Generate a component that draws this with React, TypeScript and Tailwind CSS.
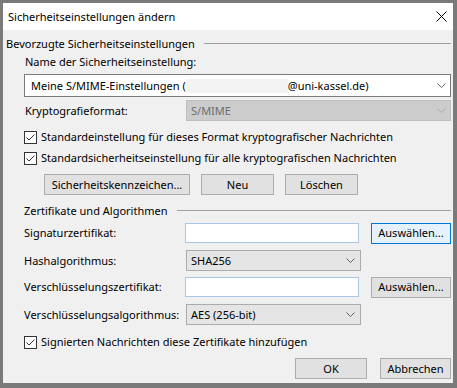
import React from "react";

const Chevron = ({ color = "#606060" }: { color?: string }) => (
  <svg width="9" height="5" viewBox="0 0 9 5" className="shrink-0">
    <path d="M0.5 0.5 L4.5 4.5 L8.5 0.5" fill="none" stroke={color} strokeWidth="1" />
  </svg>
);

const CheckBox = ({ label }: { label: string }) => (
  <div className="flex items-center h-4 ml-[18px]">
    <div className="w-[13px] h-[13px] border border-[#333333] bg-white flex items-center justify-center">
      <svg width="11" height="11" viewBox="0 0 11 11">
        <path d="M1.5 5.5 L4 8 L9.5 2.5" fill="none" stroke="#333333" strokeWidth="1" />
      </svg>
    </div>
    <span className="ml-[4px]">{label}</span>
  </div>
);

const Button = ({ label, width, focused }: { label: string; width: string; focused?: boolean }) => (
  <div
    className={`${width} h-[21px] flex items-center justify-center border ${
      focused ? "border-[#0078d7] bg-[#e5f1fb]" : "border-[#adadad] bg-[#e1e1e1]"
    }`}
  >
    {label}
  </div>
);

const GroupHeader = ({ label, indent }: { label: string; indent?: boolean }) => (
  <div className={`flex items-center h-4 ${indent ? "ml-[18px]" : ""}`}>
    <span className="whitespace-nowrap">{label}</span>
    <div className="flex-1 ml-[9px] border-t border-[#a0a0a0] mt-[-1px]"></div>
  </div>
);

const App = () => {
  return (
    <div
      className="w-[457px] h-[388px] bg-[#7a7a7a] pl-[3px] pt-[3px] pr-[4px] pb-[5px] text-[11px] text-black leading-4"
      style={{ fontFamily: '"Segoe UI", "Noto Sans", sans-serif' }}
    >
      <div className="w-full h-full flex flex-col bg-[#f0f0f0]">
        <div className="h-[27px] bg-white flex items-center justify-between pl-[5px] pr-[4px]">
          <span>Sicherheitseinstellungen ändern</span>
          <svg width="11" height="11" viewBox="0 0 11 11" className="mr-[2px]">
            <path d="M0.5 0.5 L10.5 10.5 M10.5 0.5 L0.5 10.5" stroke="#000" strokeWidth="1" />
          </svg>
        </div>

        <div className="flex flex-col pl-[3px] pr-[2px]">
          <div className="mt-[6px]">
            <GroupHeader label="Bevorzugte Sicherheitseinstellungen" />
          </div>
          <div className="mt-[2px] ml-[19px] h-4">Name der Sicherheitseinstellung:</div>
          <div className="mt-[4px] ml-[18px] h-[23px] bg-white border border-[#7a7a7a] flex items-center pl-[6px] pr-[4px]">
            <span>Meine S/MIME-Einstellungen (</span>
            <span className="inline-block w-[102px] h-[14px] bg-[#f3f3f3]"></span>
            <span>@uni-kassel.de)</span>
            <div className="flex-1"></div>
            <Chevron />
          </div>

          <div className="mt-[3px] ml-[19px] flex items-center h-[21px]">
            <span className="w-[161px]">Kryptografieformat:</span>
            <div className="flex-1 h-[21px] bg-[#cccccc] border border-[#bfbfbf] flex items-center pl-[4px] pr-[4px] text-[#6d6d6d]">
              <span className="flex-1">S/MIME</span>
              <Chevron color="#a8a8a8" />
            </div>
          </div>

          <div className="mt-[8px]">
            <CheckBox label="Standardeinstellung für dieses Format kryptografischer Nachrichten" />
          </div>
          <div className="mt-[5px]">
            <CheckBox label="Standardsicherheitseinstellung für alle kryptografischen Nachrichten" />
          </div>

          <div className="mt-[8px] ml-[38px] flex gap-[11px]">
            <Button label="Sicherheitskennzeichen..." width="w-[146px]" />
            <Button label="Neu" width="w-[73px]" />
            <Button label="Löschen" width="w-[73px]" />
          </div>

          <div className="mt-[8px]">
            <GroupHeader label="Zertifikate und Algorithmen" indent />
          </div>

          <div className="mt-[4px] ml-[18px] flex items-center h-5">
            <span className="w-[162px]">Signaturzertifikat:</span>
            <div className="w-[175px] h-5 bg-white border border-[#aac8e6]"></div>
            <div className="ml-[12px]">
              <Button label="Auswählen..." width="w-[80px]" focused />
            </div>
          </div>

          <div className="mt-[7px] ml-[18px] flex items-center h-[21px]">
            <span className="w-[162px]">Hashalgorithmus:</span>
            <div className="w-[175px] h-[21px] bg-[#e5e5e5] border border-[#acacac] flex items-center pl-[4px] pr-[5px]">
              <span className="flex-1">SHA256</span>
              <Chevron />
            </div>
          </div>

          <div className="mt-[6px] ml-[18px] flex items-center h-5">
            <span className="w-[162px]">Verschlüsselungszertifikat:</span>
            <div className="w-[175px] h-5 bg-white border border-[#aac8e6]"></div>
            <div className="ml-[12px]">
              <Button label="Auswählen..." width="w-[80px]" />
            </div>
          </div>

          <div className="mt-[7px] ml-[18px] flex items-center h-[21px]">
            <span className="w-[162px]">Verschlüsselungsalgorithmus:</span>
            <div className="w-[175px] h-[21px] bg-[#e5e5e5] border border-[#acacac] flex items-center pl-[4px] pr-[5px]">
              <span className="flex-1">AES (256-bit)</span>
              <Chevron />
            </div>
          </div>

          <div className="mt-[9px]">
            <CheckBox label="Signierten Nachrichten diese Zertifikate hinzufügen" />
          </div>

          <div className="mt-[8px] flex justify-end gap-[13px]">
            <Button label="OK" width="w-[72px]" />
            <Button label="Abbrechen" width="w-[71px]" />
          </div>
        </div>
      </div>
    </div>
  );
};

export default App;
